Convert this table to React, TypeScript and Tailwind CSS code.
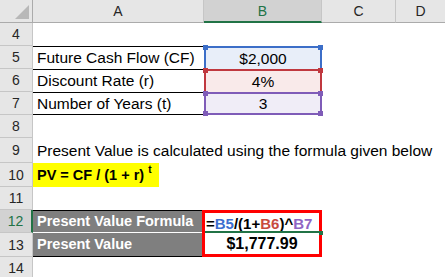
import React from 'react';

// Row header cell on the left edge of the sheet
const RowNum = ({ n, active }: { n: number; active?: boolean }) => (
    <div
        className={
            active
                ? "w-[33px] shrink-0 flex items-center justify-center bg-[#d2d2d2] border-b border-[#c6c6c6] border-r-2 border-r-[#217346] text-[14px] text-[#217346]"
                : "w-[33px] shrink-0 flex items-center justify-center bg-[#e6e6e6] border-b border-r border-[#c6c6c6] text-[14px] text-[#262626]"
        }
    >
        {n}
    </div>
);

const Handle = ({ pos, color }: { pos: string; color: string }) => (
    <span className={`absolute w-[5px] h-[5px] z-10 ${pos} ${color}`} />
);

const App = () => {
    return (
        <div className="w-[445px] h-[277px] overflow-hidden bg-white font-['Liberation_Sans',Arial,sans-serif] text-[15.5px] text-black leading-none">
            {/* Column headers */}
            <div className="flex h-[23px]">
                <div className="w-[33px] shrink-0 relative bg-[#e6e6e6] border-b border-r border-[#ababab]">
                    <svg width="33" height="23" className="absolute left-0 top-0">
                        <polygon points="29,5 29,19 15,19" fill="#b8b8b8" />
                    </svg>
                </div>
                <div className="w-[171px] shrink-0 flex items-center justify-center bg-[#e6e6e6] border-b border-r border-[#ababab] border-r-[#c6c6c6] text-[14px] text-[#262626]">A</div>
                <div className="w-[118px] shrink-0 flex items-center justify-center bg-[#d2d2d2] border-b-2 border-[#217346] border-r border-r-[#c6c6c6] text-[14px] text-[#217346]">B</div>
                <div className="w-[74px] shrink-0 flex items-center justify-center bg-[#e6e6e6] border-b border-r border-[#ababab] border-r-[#c6c6c6] text-[14px] text-[#262626]">C</div>
                <div className="flex-1 flex items-center justify-center bg-[#e6e6e6] border-b border-[#ababab] text-[14px] text-[#262626]">D</div>
            </div>

            {/* Row 4 */}
            <div className="flex h-[23px]">
                <RowNum n={4} />
            </div>

            {/* Rows 5-7: inputs */}
            <div className="flex h-[23px]">
                <RowNum n={5} />
                <div className="w-[171px] shrink-0 flex items-center pl-[4px] border-t border-black whitespace-nowrap">Future Cash Flow (CF)</div>
                <div className="w-[118px] shrink-0 relative flex items-center justify-center bg-[#e8eef9] border-2 border-b-0 border-[#3c6ec8]">
                    $2,000
                    <Handle pos="-left-[3px] -top-[3px]" color="bg-[#3c6ec8]" />
                    <Handle pos="-right-[3px] -top-[3px]" color="bg-[#3c6ec8]" />
                </div>
            </div>
            <div className="flex h-[23px]">
                <RowNum n={6} />
                <div className="w-[171px] shrink-0 flex items-center pl-[4px] border-t border-black whitespace-nowrap">Discount Rate (r)</div>
                <div className="w-[118px] shrink-0 relative flex items-center justify-center bg-[#f9eaea] border-2 border-b-0 border-[#c0383f]">
                    4%
                    <Handle pos="-left-[3px] -top-[3px]" color="bg-[#c0383f]" />
                    <Handle pos="-right-[3px] -top-[3px]" color="bg-[#c0383f]" />
                </div>
            </div>
            <div className="flex h-[23px]">
                <RowNum n={7} />
                <div className="w-[171px] shrink-0 flex items-center pl-[4px] border-t border-b border-black whitespace-nowrap">Number of Years (t)</div>
                <div className="w-[118px] shrink-0 relative flex items-center justify-center bg-[#f0edf7] border-2 border-[#7f5cb8]">
                    3
                    <Handle pos="-left-[3px] -top-[3px]" color="bg-[#7f5cb8]" />
                    <Handle pos="-right-[3px] -top-[3px]" color="bg-[#7f5cb8]" />
                    <Handle pos="-left-[3px] -bottom-[3px]" color="bg-[#7f5cb8]" />
                    <Handle pos="-right-[3px] -bottom-[3px]" color="bg-[#7f5cb8]" />
                </div>
            </div>

            {/* Row 8 */}
            <div className="flex h-[23px]">
                <RowNum n={8} />
            </div>

            {/* Row 9 */}
            <div className="flex h-[25px]">
                <RowNum n={9} />
                <div className="flex items-center pl-[4px] whitespace-nowrap">
                    Present Value is calculated using the formula given below
                </div>
            </div>

            {/* Row 10: formula */}
            <div className="flex h-[24px]">
                <RowNum n={10} />
                <div className="w-[126px] shrink-0 flex items-center pl-[4px] bg-[#ffff00] font-bold text-[14.5px] whitespace-nowrap">
                    PV = CF / (1 + r)
                    <span className="ml-[4px] -mt-[10px] text-[10px]">t</span>
                </div>
            </div>

            {/* Row 11 */}
            <div className="flex h-[23px]">
                <RowNum n={11} />
            </div>

            {/* Row 12 */}
            <div className="flex h-[23px]">
                <RowNum n={12} active />
                <div className="w-[169px] shrink-0 flex items-center pl-[4px] bg-[#7f7f7f] border-t border-black border-b border-b-white text-white font-bold text-[14.5px] whitespace-nowrap">
                    Present Value Formula
                </div>
                <div className="w-[120px] shrink-0 relative flex items-center pl-[1px] border-[3px] border-b-0 border-[#ff0000] font-bold text-[15px] whitespace-nowrap">
                    <div className="absolute left-0 right-0 bottom-0 h-[2px] bg-[#217346]" />
                    <span className="absolute -right-[4px] -bottom-[2px] w-[4px] h-[4px] bg-[#217346]" />
                    <span>=</span>
                    <span className="text-[#3d6fd0]">B5</span>
                    <span>/(1+</span>
                    <span className="text-[#c84a3e]">B6</span>
                    <span>)^</span>
                    <span className="text-[#8f64c4]">B7</span>
                </div>
            </div>

            {/* Row 13 */}
            <div className="flex h-[24px]">
                <RowNum n={13} />
                <div className="w-[169px] shrink-0 flex items-center pl-[4px] bg-[#7f7f7f] border-b border-black text-white font-bold text-[14.5px] whitespace-nowrap">
                    Present Value
                </div>
                <div className="w-[120px] shrink-0 flex items-center justify-center border-[3px] border-t-0 border-[#ff0000] font-bold text-[16px]">
                    $1,777.99
                </div>
            </div>

            {/* Row 14 */}
            <div className="flex h-[23px]">
                <RowNum n={14} />
            </div>
        </div>
    );
};

export default App;
